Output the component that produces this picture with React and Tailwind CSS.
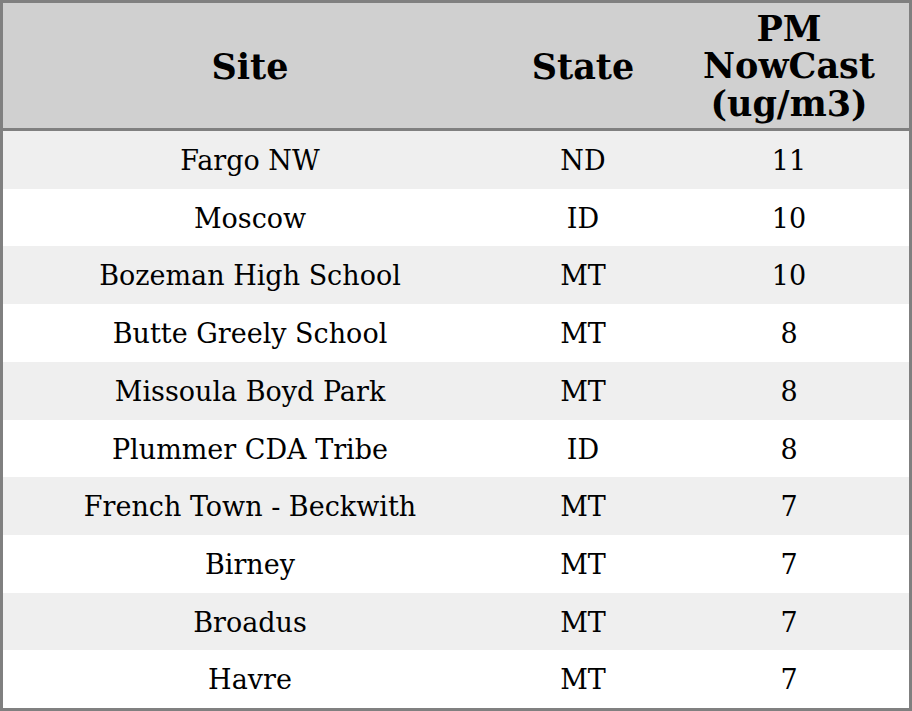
const rows = [
  ['Fargo NW', 'ND', '11'],
  ['Moscow', 'ID', '10'],
  ['Bozeman High School', 'MT', '10'],
  ['Butte Greely School', 'MT', '8'],
  ['Missoula Boyd Park', 'MT', '8'],
  ['Plummer CDA Tribe', 'ID', '8'],
  ['French Town - Beckwith', 'MT', '7'],
  ['Birney', 'MT', '7'],
  ['Broadus', 'MT', '7'],
  ['Havre', 'MT', '7'],
];

export default function App() {
  return (
    <div className="w-[912px] h-[711px] bg-white border-[3px] border-[#808080] flex flex-col text-black font-['DejaVu_Serif',serif]">
      <div className="h-[128px] shrink-0 grid grid-cols-[494px_172px_240px] items-center bg-[#d0d0d0] border-b-[3px] border-[#808080] text-[35px] font-bold leading-[37.5px] text-center">
        <div className="pt-[2px]">Site</div>
        <div className="pt-[2px]">State</div>
        <div className="pt-[1px]">
          PM
          <br />
          NowCast
          <br />
          (ug/m3)
        </div>
      </div>
      <div className="flex-1 grid grid-rows-[repeat(10,1fr)] text-[27px] text-center">
        {rows.map(([site, state, pm], i) => (
          <div
            key={site}
            className={`grid grid-cols-[494px_172px_240px] items-center pt-[3px] ${i % 2 === 0 ? 'bg-[#efefef]' : 'bg-white'}`}
          >
            <div>{site}</div>
            <div>{state}</div>
            <div>{pm}</div>
          </div>
        ))}
      </div>
    </div>
  );
}
